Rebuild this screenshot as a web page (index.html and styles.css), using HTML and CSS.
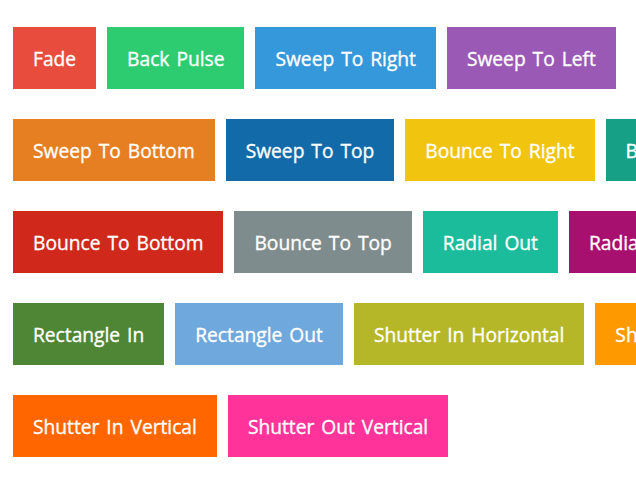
FILE: index.html
```html
<!DOCTYPE html>
<html lang="en">

<head>
    <meta charset="UTF-8">
    <meta name="viewport" content="width=device-width, initial-scale=1.0">
    <title>Hover Effects</title>
    <link rel="stylesheet" href="styles.css">
</head>

<body>
    <div class="row">
        <a class="btn fade" href="#">Fade</a>
        <a class="btn back-pulse" href="#">Back Pulse</a>
        <a class="btn sweep-right" href="#">Sweep To Right</a>
        <a class="btn sweep-left" href="#">Sweep To Left</a>
    </div>
    <div class="row">
        <a class="btn sweep-bottom" href="#">Sweep To Bottom</a>
        <a class="btn sweep-top" href="#">Sweep To Top</a>
        <a class="btn bounce-right" href="#">Bounce To Right</a>
        <a class="btn bounce-left" href="#">Bounce To Left</a>
    </div>
    <div class="row">
        <a class="btn bounce-bottom" href="#">Bounce To Bottom</a>
        <a class="btn bounce-top" href="#">Bounce To Top</a>
        <a class="btn radial-out" href="#">Radial Out</a>
        <a class="btn radial-in" href="#">Radial In</a>
    </div>
    <div class="row">
        <a class="btn rect-in" href="#">Rectangle In</a>
        <a class="btn rect-out" href="#">Rectangle Out</a>
        <a class="btn shutter-in-h" href="#">Shutter In Horizontal</a>
        <a class="btn shutter-out-h" href="#">Shutter Out Horizontal</a>
    </div>
    <div class="row">
        <a class="btn shutter-in-v" href="#">Shutter In Vertical</a>
        <a class="btn shutter-out-v" href="#">Shutter Out Vertical</a>
    </div>
</body>

</html>
```

FILE: styles.css
```css
html,
body {
    overflow: hidden;
}

body {
    margin: 0;
    padding: 27px 0 0 13px;
    font-family: "Open Sans", Arial, sans-serif;
    background: #fff;
}

.row {
    display: flex;
    flex-wrap: nowrap;
    gap: 11px;
    margin-bottom: 30px;
    width: max-content;
}

.btn {
    display: block;
    height: 62px;
    line-height: 64px;
    padding: 0 20px;
    color: #fff;
    font-size: 19.2px;
    word-spacing: 2px;
    -webkit-text-stroke: 0.35px #fff;
    text-decoration: none;
    white-space: nowrap;
}

.fade { background-color: #e74c3c; }
.back-pulse { background-color: #2ecc71; }
.sweep-right { background-color: #3498db; }
.sweep-left { background-color: #9b59b6; }
.sweep-bottom { background-color: #e67e22; }
.sweep-top { background-color: #126ba8; }
.bounce-right { background-color: #f1c40f; }
.bounce-left { background-color: #16a085; }
.bounce-bottom { background-color: #d0281b; }
.bounce-top { background-color: #7f8c8d; }
.radial-out { background-color: #1abc9c; }
.radial-in { background-color: #a8106f; }
.rect-in { background-color: #4e8636; }
.rect-out { background-color: #6fa8dc; }
.shutter-in-h { background-color: #b5b728; }
.shutter-out-h { background-color: #ff9900; }
.shutter-in-v { background-color: #ff6600; }
.shutter-out-v { background-color: #ff3399; }
```
